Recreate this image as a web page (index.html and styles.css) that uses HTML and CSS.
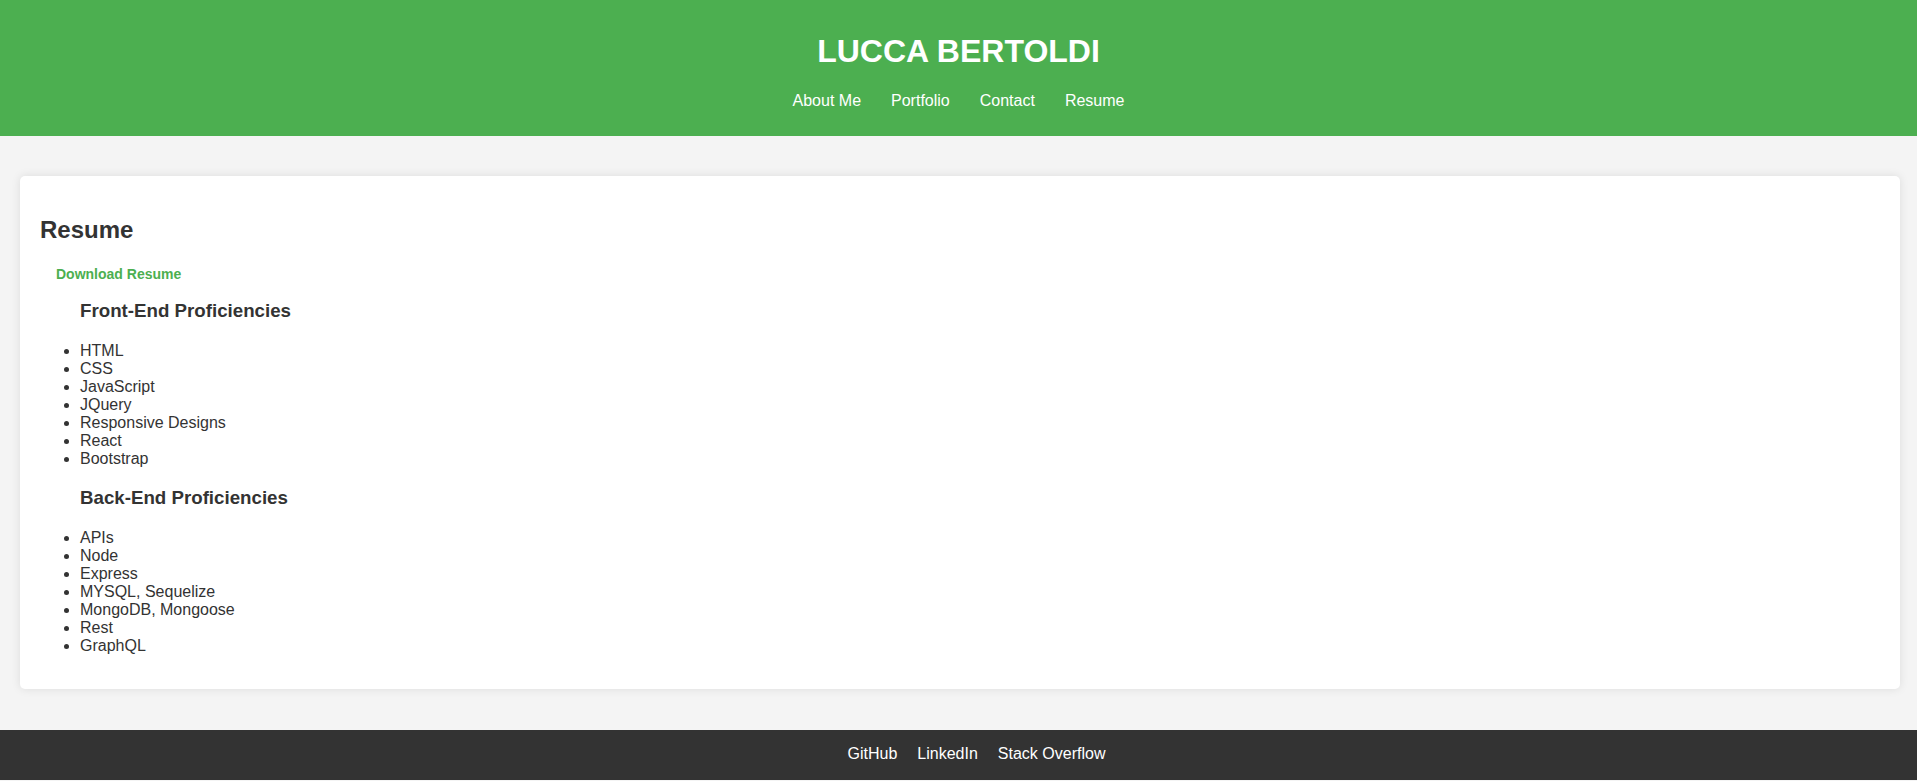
FILE: index.html
```html
<!DOCTYPE html>
<html lang="en">
<head>
<meta charset="utf-8">
<title>Lucca Bertoldi - Resume</title>
<link rel="stylesheet" href="styles.css">
</head>
<body>
<header class="site-header">
  <h1 class="site-title">LUCCA BERTOLDI</h1>
  <nav class="site-nav">
    <a href="#" class="nav-link">About Me</a>
    <a href="#" class="nav-link">Portfolio</a>
    <a href="#" class="nav-link">Contact</a>
    <a href="#" class="nav-link">Resume</a>
  </nav>
</header>
<main class="main">
  <section class="card">
    <h2 class="card-title">Resume</h2>
    <div class="download"><a href="#" class="download-link">Download Resume</a></div>
    <div class="skills">
      <h3 class="skills-title">Front-End Proficiencies</h3>
      <ul class="skills-list">
        <li>HTML</li>
        <li>CSS</li>
        <li>JavaScript</li>
        <li>JQuery</li>
        <li>Responsive Designs</li>
        <li>React</li>
        <li>Bootstrap</li>
      </ul>
      <h3 class="skills-title second">Back-End Proficiencies</h3>
      <ul class="skills-list last">
        <li>APIs</li>
        <li>Node</li>
        <li>Express</li>
        <li>MYSQL, Sequelize</li>
        <li>MongoDB, Mongoose</li>
        <li>Rest</li>
        <li>GraphQL</li>
      </ul>
    </div>
  </section>
</main>
<footer class="site-footer">
  <nav class="footer-nav">
    <a href="#" class="footer-link">GitHub</a>
    <a href="#" class="footer-link">LinkedIn</a>
    <a href="#" class="footer-link">Stack Overflow</a>
  </nav>
</footer>
</body>
</html>
```

FILE: styles.css
```css
* {
  box-sizing: border-box;
}

body {
  margin: 0;
  font-family: "Liberation Sans", Arial, sans-serif;
  color: #333;
  background: #f4f4f4;
}

.site-header {
  background: #4caf50;
  color: #fff;
  text-align: center;
  padding: 33px 0 26px;
}

.site-title {
  margin: 0 0 22px;
  font-size: 32px;
  line-height: 37px;
  font-weight: bold;
}

.site-nav {
  display: flex;
  justify-content: center;
  gap: 30px;
  line-height: 18px;
  font-size: 16px;
}

.nav-link {
  color: #fff;
  text-decoration: none;
}

.main {
  padding: 40px 17px 41px 20px;
}

.card {
  background: #fff;
  border-radius: 5px;
  box-shadow: 0 0 10px rgba(0, 0, 0, 0.1);
  padding: 20px 20px 20px;
}

.card-title {
  margin: 20px 0 0;
  font-size: 24px;
  line-height: 28px;
  font-weight: bold;
}

.download {
  margin-top: 22px;
  padding-left: 16px;
  line-height: 16px;
}

.download-link {
  color: #4caf50;
  font-size: 14px;
  font-weight: bold;
  text-decoration: none;
}

.skills {
  padding-left: 40px;
}

.skills-title {
  margin: 18px 0 20px;
  font-size: 18.72px;
  line-height: 22px;
  font-weight: bold;
}

.skills-title.second {
  margin-top: 19px;
}

.skills-list {
  margin: 0;
  padding: 0;
  list-style: disc outside;
  font-size: 16px;
  line-height: 18px;
}

.skills-list.last {
  margin-bottom: 14px;
}

.site-footer {
  background: #333;
  color: #fff;
  padding: 15px 0 17px 36px;
}

.footer-nav {
  display: flex;
  justify-content: center;
  gap: 20px;
  font-size: 16px;
  line-height: 18px;
}

.footer-link {
  color: #fff;
  text-decoration: none;
}
```
